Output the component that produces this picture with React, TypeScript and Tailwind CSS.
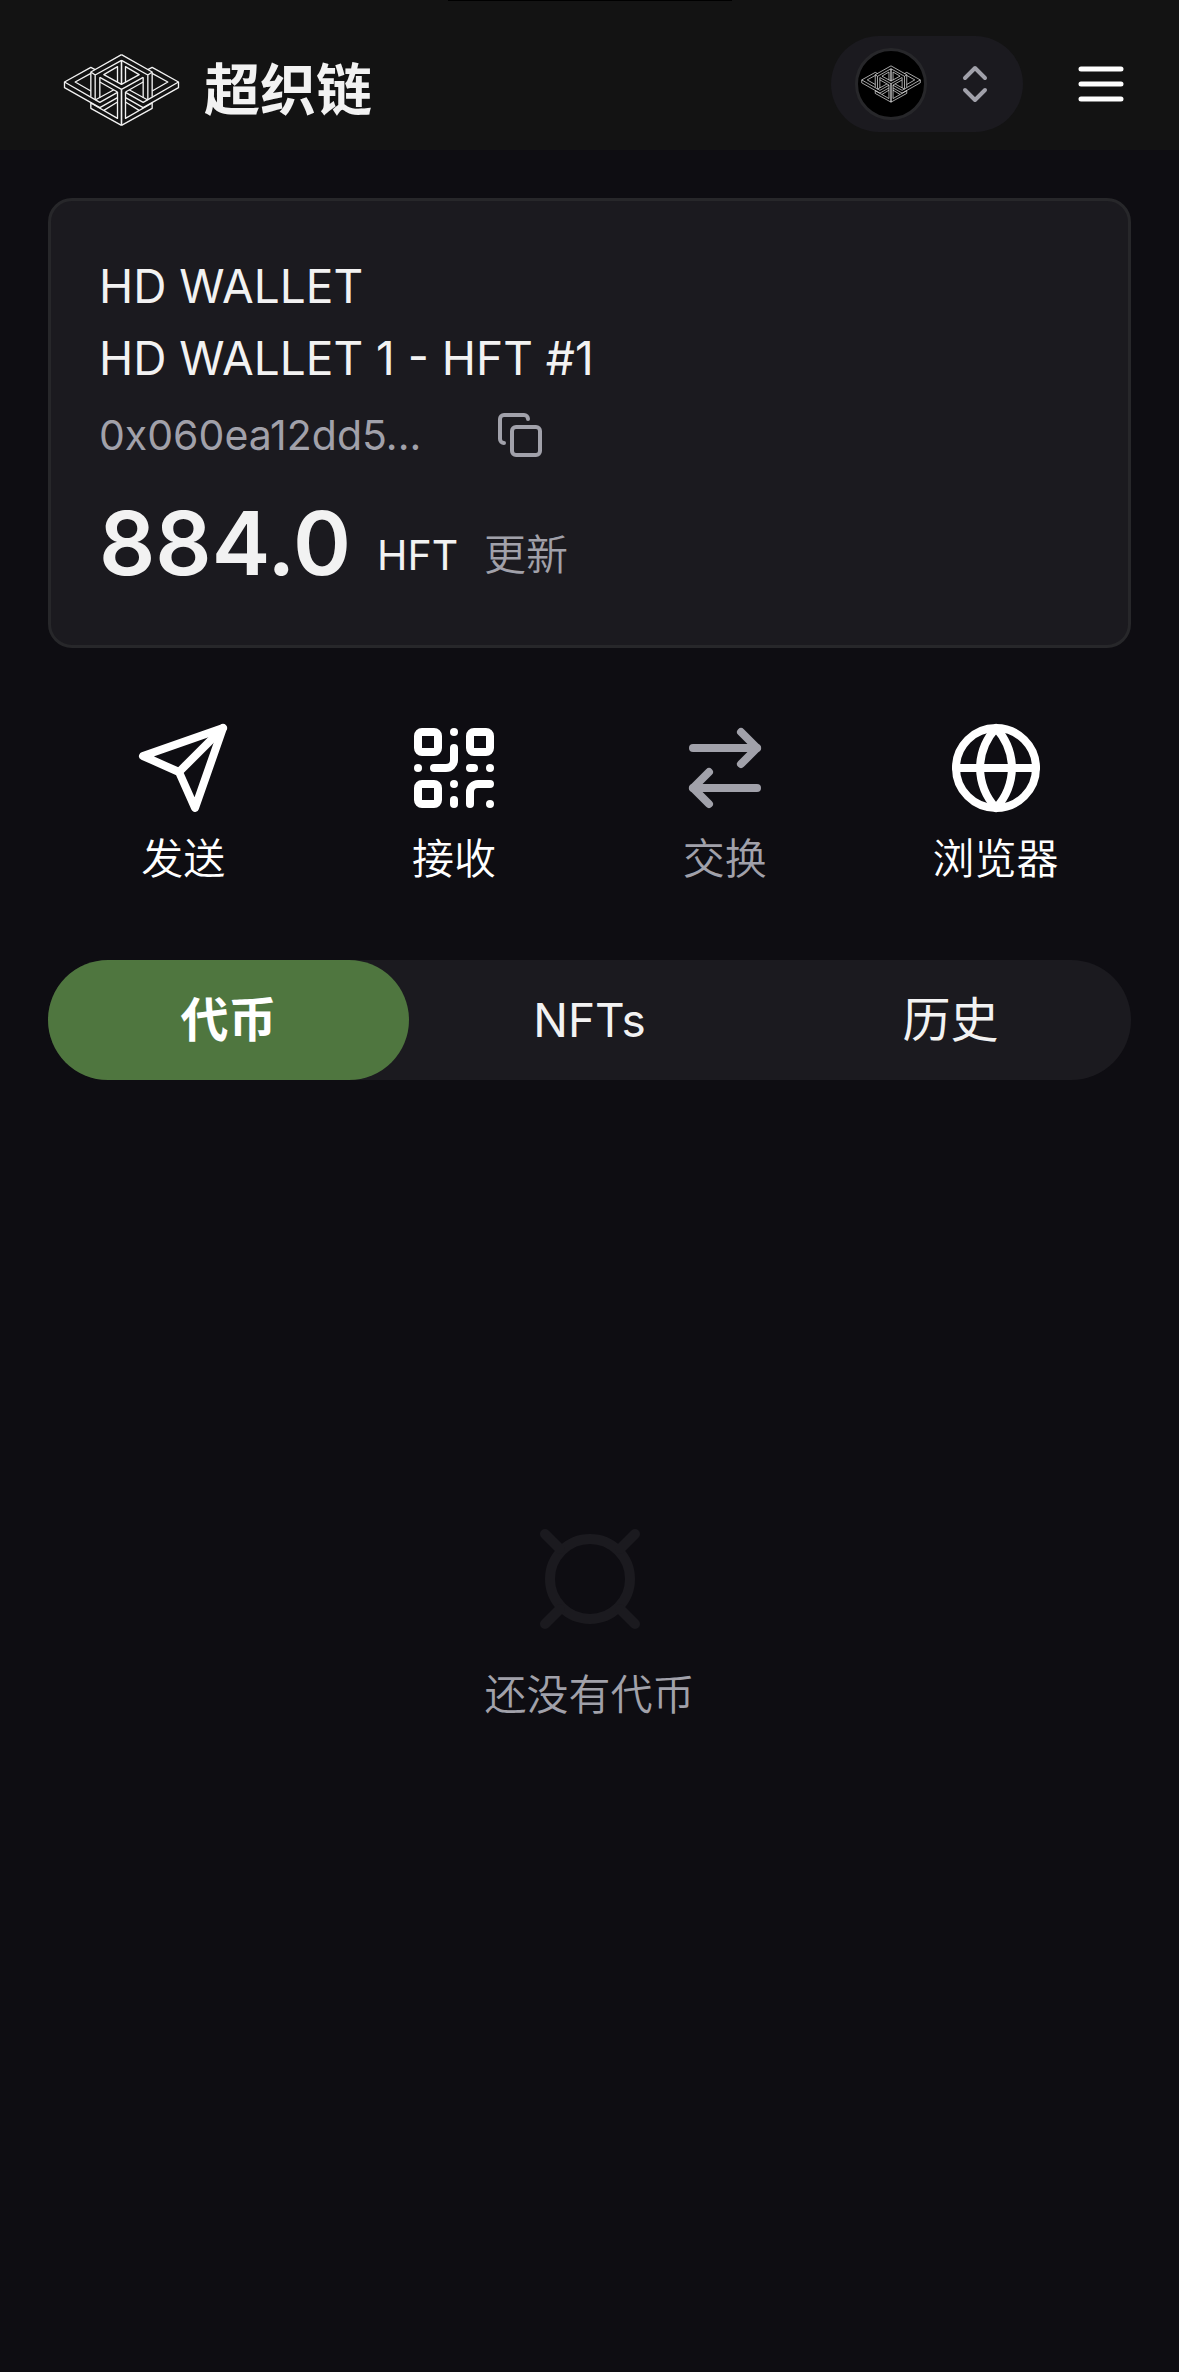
import { useState } from 'react';
import type { ReactNode } from 'react';
import { ArrowRightLeft, ChevronsUpDown, Copy, QrCode } from 'lucide-react';

const tabs = [
  { label: '代币', size: 'text-[48px]' },
  { label: 'NFTs', size: 'text-[46px]' },
  { label: '历史', size: 'text-[48px]' },
];

function LogoHalf() {
  return (
    <g>
      {/* roof */}
      <path d="M364 161 272 213V287M364 178 285 222V294M272 213 285 222M299 229V290" />
      <path d="M364 178V250L311 221 352 197V244" />
      {/* wing */}
      <path d="M285 206 272 199 193 243V260L299 320 352 290" />
      <path d="M193 243 299 304 352 274M272 217 225 243 272 270" />
      {/* front */}
      <path d="M299 229 364 265V373M299 243 352 273M285 297 340 267" />
      {/* base */}
      <path d="M364 373 272 322V306L352 352V273M311 328 352 303" />
    </g>
  );
}

function Logo({ className }: { className: string }) {
  return (
    <svg
      viewBox="189 156 350 222"
      fill="none"
      stroke="currentColor"
      strokeWidth={4}
      strokeLinejoin="round"
      className={className}
    >
      <LogoHalf />
      <g transform="matrix(-1 0 0 1 728 0)">
        <LogoHalf />
      </g>
    </svg>
  );
}

function StrokeIcon({ className, children }: { className: string; children: ReactNode }) {
  return (
    <svg
      viewBox="0 0 24 24"
      fill="none"
      stroke="currentColor"
      strokeWidth={2}
      strokeLinecap="round"
      strokeLinejoin="round"
      className={className}
    >
      {children}
    </svg>
  );
}

interface ActionProps {
  label: string;
  icon: ReactNode;
  disabled?: boolean;
}

function Action({ label, icon, disabled }: ActionProps) {
  return (
    <button
      disabled={disabled}
      className={
        disabled
          ? 'flex flex-col items-center gap-[13px] text-[#a1a1aa]'
          : 'flex flex-col items-center gap-[13px] text-white'
      }
    >
      {icon}
      <span className="text-[42px] leading-[60px] font-[350]">{label}</span>
    </button>
  );
}

export default function App() {
  const [activeTab, setActiveTab] = useState('代币');

  return (
    <div className="relative flex min-h-screen flex-col bg-[#0e0d12] font-['Inter','Noto_Sans_CJK_SC',sans-serif] text-[#f2f2f2]">
      <div className="absolute top-0 left-1/2 h-px w-[284px] -translate-x-1/2 bg-black"></div>

      {/* Header */}
      <header className="flex items-center justify-between bg-[#131313] pt-9 pr-12 pb-[18px] pl-[63px]">
        <div className="flex items-center gap-6 pt-[11px]">
          <Logo className="h-[74px] w-[117px]" />
          <h1 className="text-[56px] leading-[80px] font-semibold">超织链</h1>
        </div>
        <div className="flex items-center gap-12">
          <button aria-label="Network" className="flex items-center gap-6 rounded-full bg-[#1b1a1f] px-6 py-3">
            <span className="flex h-[72px] w-[72px] items-center justify-center rounded-full border-[3px] border-[#27272a] bg-black">
              <Logo className="h-[38px] w-[60px]" />
            </span>
            <ChevronsUpDown className="h-12 w-12 text-[#a1a1aa]" />
          </button>
          <button aria-label="Menu" className="text-white">
            <StrokeIcon className="h-[60px] w-[60px]">
              <path d="M4 6h16M4 12h16M4 18h16" />
            </StrokeIcon>
          </button>
        </div>
      </header>

      <main className="flex flex-1 flex-col px-12 pt-12">
        {/* Account */}
        <section className="rounded-3xl border-[3px] border-[#27272a] bg-[#1b1a1f] px-12 pt-[49px] pb-12">
          <p className="text-[46px] leading-[72px]">HD WALLET</p>
          <p className="text-[46px] leading-[72px]">HD WALLET 1 - HFT #1</p>
          <div className="flex h-[82px] items-center gap-[75px] text-[#a1a1aa]">
            <span className="text-[41px] leading-[60px]">0x060ea12dd5...</span>
            <button aria-label="Copy address">
              <Copy className="h-12 w-12" />
            </button>
          </div>
          <div className="mt-[13px] flex items-end gap-[26px]">
            <span className="text-[88px] leading-[108px] font-semibold">884.0</span>
            <span className="text-[41px] leading-[84px]">HFT</span>
            <button className="text-[42px] leading-[84px] font-[350] text-[#a1a1aa]">更新</button>
          </div>
        </section>

        {/* Actions */}
        <nav className="mt-[72px] grid grid-cols-4">
          <Action
            label="发送"
            icon={
              <StrokeIcon className="h-24 w-24">
                <path d="m22 2-7 20-4-9-9-4Z" />
                <path d="M22 2 11 13" />
              </StrokeIcon>
            }
          />
          <Action label="接收" icon={<QrCode className="h-24 w-24" />} />
          <Action label="交换" disabled icon={<ArrowRightLeft className="h-24 w-24" />} />
          <Action
            label="浏览器"
            icon={
              <StrokeIcon className="h-24 w-24">
                <circle cx="12" cy="12" r="10" />
                <path d="M2 12h20" />
                <path d="M12 2a15.3 15.3 0 0 1 4 10 15.3 15.3 0 0 1-4 10 15.3 15.3 0 0 1-4-10 15.3 15.3 0 0 1 4-10z" />
              </StrokeIcon>
            }
          />
        </nav>

        {/* Tabs */}
        <div role="tablist" className="mt-[71px] grid grid-cols-3 rounded-full bg-[#1b1a1f]">
          {tabs.map(tab => (
            <button
              key={tab.label}
              role="tab"
              aria-selected={tab.label === activeTab}
              onClick={() => setActiveTab(tab.label)}
              className={
                tab.label === activeTab
                  ? `rounded-full bg-[#4f763f] py-6 leading-[72px] font-semibold text-white ${tab.size}`
                  : `rounded-full py-6 leading-[72px] ${tab.size}`
              }
            >
              {tab.label}
            </button>
          ))}
        </div>

        {/* Empty list */}
        <div className="flex flex-1 flex-col items-center justify-center gap-[26px] pb-[208px]">
          <StrokeIcon className="h-[120px] w-[120px] text-[#1b1a1f]">
            <circle cx="12" cy="12" r="8" />
            <path d="m3 3 3 3M21 3l-3 3M3 21l3-3M21 21l-3-3" />
          </StrokeIcon>
          <p className="text-[42px] leading-[60px] font-[350] text-[#a1a1aa]">还没有代币</p>
        </div>
      </main>
    </div>
  );
}
